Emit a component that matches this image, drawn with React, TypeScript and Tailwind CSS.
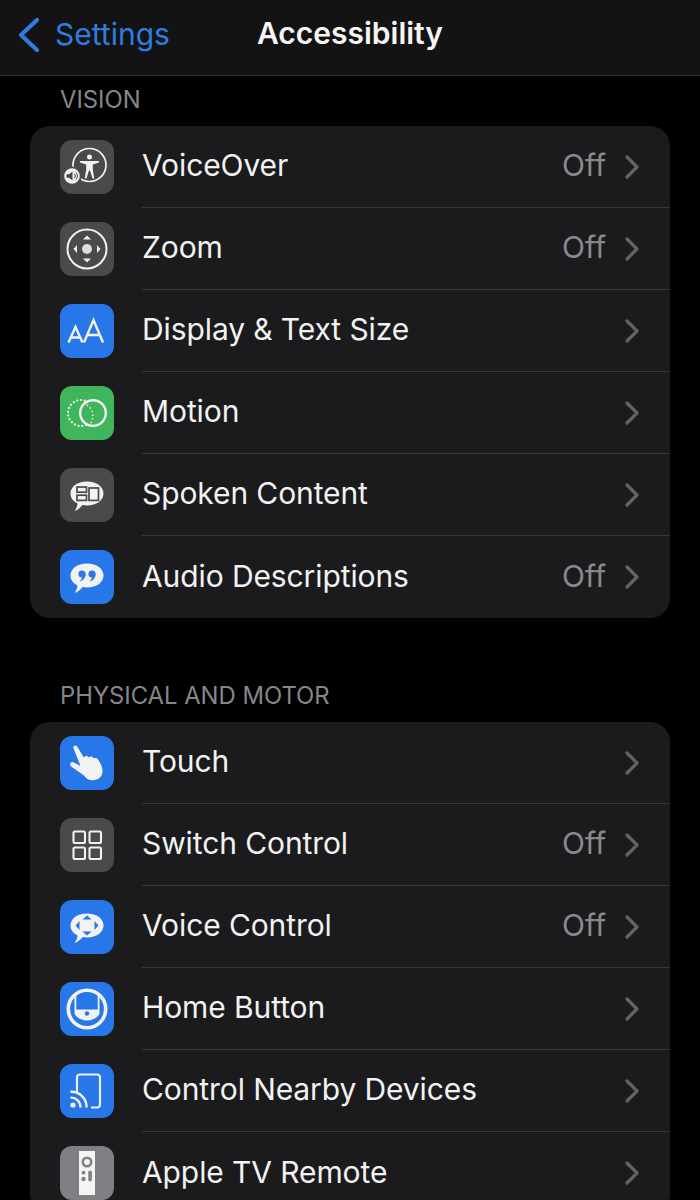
import React from "react";

const W = "#f2f2f2";

function VoiceOverIcon() {
  return (
    <svg viewBox="0 0 54 54" className="w-full h-full">
      <circle cx="29.5" cy="25" r="16.5" fill="none" stroke={W} strokeWidth="1.7" />
      <circle cx="29.5" cy="17" r="2.5" fill={W} />
      <path d="M20 21 L39 21 L39 22.4 L32.8 24.4 L32.8 29.5 L34.3 38.5 L32.5 38.5 L30 30.5 L29 30.5 L26.5 38.5 L24.7 38.5 L26.2 29.5 L26.2 24.4 L20 22.4 Z" fill={W} />
      <circle cx="12" cy="36" r="9.6" fill="#4a4a4a" />
      <circle cx="12" cy="36" r="7.8" fill={W} />
      <path d="M6.5 34.2 H9 L12.5 31.5 V40.5 L9 37.8 H6.5 Z" fill="#4a4a4a" />
      <path d="M14.3 33.8 A3 3 0 0 1 14.3 38.2 M16 32.5 A5 5 0 0 1 16 39.5" fill="none" stroke="#4a4a4a" strokeWidth="1" />
    </svg>
  );
}
function ZoomIcon() {
  return (
    <svg viewBox="0 0 54 54" className="w-full h-full">
      <circle cx="27" cy="27" r="19.5" fill="none" stroke={W} strokeWidth="2" />
      <circle cx="27" cy="27" r="5" fill="#dcdcdc" />
      <path d="M27 13.5 L31 17.5 H23 Z M27 40.5 L31 36.5 H23 Z M13.5 27 L17 23 V31 Z M40.5 27 L37 23 V31 Z" fill={W} />
    </svg>
  );
}
function TextSizeIcon() {
  return (
    <svg viewBox="0 0 54 54" className="w-full h-full">
      <path d="M8.5 38.5 L15.5 23 L22.5 38.5 M11 33.5 H20" fill="none" stroke={W} strokeWidth="2.4" />
      <path d="M24 38.5 L33.5 16 L43 38.5 M27 31 H40" fill="none" stroke={W} strokeWidth="2.4" />
    </svg>
  );
}
function MotionIcon() {
  return (
    <svg viewBox="0 0 54 54" className="w-full h-full">
      <circle cx="21" cy="27" r="13" fill="none" stroke={W} strokeWidth="2.2" strokeDasharray="0.1 3.7" strokeLinecap="round" />
      <circle cx="33" cy="27" r="12.8" fill="#3fb65b" stroke={W} strokeWidth="2.4" />
      <path d="M24 17.5 A13 13 0 0 1 29 39" fill="none" stroke="#dbe8a8" strokeWidth="1.8" strokeDasharray="0.1 3.7" strokeLinecap="round" />
    </svg>
  );
}
function Bubble({ fill = W }: { fill?: string }) {
  return (
    <path
      d="M27 13.5 C37 13.5 43.5 19 43.5 25.5 C43.5 32.5 36.5 37.5 27 37.5 C25.5 37.5 24 37.3 22.7 37 C20.5 39.5 17 42.8 14.5 42.7 C16.5 40.5 17.3 38 17.5 35.5 C13 33.3 10.5 29.8 10.5 25.5 C10.5 19 17 13.5 27 13.5 Z"
      fill={fill}
    />
  );
}
function SpokenIcon() {
  return (
    <svg viewBox="0 0 54 54" className="w-full h-full">
      <Bubble />
      <g fill="none" stroke="#4a4a4a" strokeWidth="1.7">
        <rect x="17" y="19" width="9.5" height="5.2" />
        <rect x="17" y="27.2" width="9.5" height="5.2" />
        <rect x="29" y="20" width="9.5" height="12.4" />
      </g>
    </svg>
  );
}
function AudioDescIcon() {
  const b = "#2777e8";
  return (
    <svg viewBox="0 0 54 54" className="w-full h-full">
      <Bubble />
      <circle cx="22" cy="24" r="3.6" fill={b} />
      <path d="M25.6 24 C25.6 28.5 22.5 31 19.5 31.5 C21.5 30 22 28 22 26.5 Z" fill={b} />
      <circle cx="32" cy="24" r="3.6" fill={b} />
      <path d="M35.6 24 C35.6 28.5 32.5 31 29.5 31.5 C31.5 30 32 28 32 26.5 Z" fill={b} />
    </svg>
  );
}
function TouchIcon() {
  return (
    <svg viewBox="0 0 54 54" className="w-full h-full">
      <path
        d="M13.2 11.5 C13.8 9 16.5 8.8 17.5 11 L23.8 21.5 C25 19.5 27.8 19.5 28.8 21.5 C30 20 32.8 20.3 33.8 22.5 C35 21.5 37.3 22 38.3 24 C41 28 42.8 32 42.5 36 C42 41 38 44.2 33 44.2 C28.5 44.2 26 42.5 24 39.5 L11.5 30.8 C8.8 28.8 10.6 25 13.5 26.2 L20.5 30 Z"
        fill={W}
      />
    </svg>
  );
}
function SwitchIcon() {
  return (
    <svg viewBox="0 0 54 54" className="w-full h-full">
      <g fill="none" stroke={W} strokeWidth="2.1">
        <rect x="13.5" y="13.5" width="11.5" height="11.5" rx="1.5" />
        <rect x="29.5" y="13.5" width="11.5" height="11.5" rx="1.5" />
        <rect x="13.5" y="29.5" width="11.5" height="11.5" rx="1.5" />
        <rect x="29.5" y="29.5" width="11.5" height="11.5" rx="1.5" />
      </g>
    </svg>
  );
}
function VoiceControlIcon() {
  const b = "#2777e8";
  return (
    <svg viewBox="0 0 54 54" className="w-full h-full">
      <Bubble />
      <path d="M27 15.5 L31.5 19.5 H22.5 Z M27 35.5 L31.5 31.5 H22.5 Z M15.5 25.5 L19.5 21 V30 Z M38.5 25.5 L34.5 21 V30 Z" fill={b} />
    </svg>
  );
}
function HomeButtonIcon() {
  const b = "#2777e8";
  return (
    <svg viewBox="0 0 54 54" className="w-full h-full">
      <circle cx="27" cy="27" r="18.7" fill="none" stroke={W} strokeWidth="3.6" />
      <path d="M14.5 14.5 C15 13.8 15.5 13.3 16.3 12.8 V27.5 H37.7 V12.8 C38.5 13.3 39 13.8 39.5 14.5 V32 C37 36 32 38.5 27 38.5 C22 38.5 17 36 14.5 32 Z" fill={W} />
      <circle cx="27" cy="31.5" r="2.2" fill={b} />
    </svg>
  );
}
function NearbyIcon() {
  return (
    <svg viewBox="0 0 54 54" className="w-full h-full">
      <path d="M17 29 V13.5 C17 11.5 18 10.5 20 10.5 H37 C39 10.5 40 11.5 40 13.5 V40.5 C40 42.5 39 43.5 37 43.5 H31" fill="none" stroke="#e6f0fc" strokeWidth="2.2" />
      <circle cx="13" cy="41" r="2.6" fill={W} />
      <path d="M10.5 33.6 A9.5 9.5 0 0 1 20.5 43.5 M10.5 27.8 A15 15 0 0 1 26.5 43.5" fill="none" stroke={W} strokeWidth="2.4" />
    </svg>
  );
}
function RemoteIcon() {
  return (
    <svg viewBox="0 0 54 54" className="w-full h-full">
      <rect x="19" y="5" width="16" height="44" fill="#f4f4f4" />
      <circle cx="27" cy="16" r="4.2" fill="none" stroke="#808084" strokeWidth="2.6" />
      <circle cx="23.5" cy="26.7" r="1.9" fill="#808084" />
      <circle cx="23.5" cy="33" r="2.2" fill="#808084" />
      <rect x="28.3" y="24.5" width="3.6" height="11" rx="1.8" fill="#808084" />
    </svg>
  );
}

type Row = { label: string; off?: boolean; bg: string; icon: React.ReactNode };

const vision: Row[] = [
  { label: "VoiceOver", off: true, bg: "bg-[#4a4a4a]", icon: <VoiceOverIcon /> },
  { label: "Zoom", off: true, bg: "bg-[#4a4a4a]", icon: <ZoomIcon /> },
  { label: "Display & Text Size", bg: "bg-[#2777e8]", icon: <TextSizeIcon /> },
  { label: "Motion", bg: "bg-[#3fb65b]", icon: <MotionIcon /> },
  { label: "Spoken Content", bg: "bg-[#4a4a4a]", icon: <SpokenIcon /> },
  { label: "Audio Descriptions", off: true, bg: "bg-[#2777e8]", icon: <AudioDescIcon /> },
];

const physical: Row[] = [
  { label: "Touch", bg: "bg-[#2777e8]", icon: <TouchIcon /> },
  { label: "Switch Control", off: true, bg: "bg-[#4a4a4a]", icon: <SwitchIcon /> },
  { label: "Voice Control", off: true, bg: "bg-[#2777e8]", icon: <VoiceControlIcon /> },
  { label: "Home Button", bg: "bg-[#2777e8]", icon: <HomeButtonIcon /> },
  { label: "Control Nearby Devices", bg: "bg-[#2777e8]", icon: <NearbyIcon /> },
  { label: "Apple TV Remote", bg: "bg-[#808084]", icon: <RemoteIcon /> },
];

function ListRow({ row, last }: { row: Row; last: boolean }) {
  return (
    <div className="flex h-[82px] items-stretch pl-[30px]">
      <div className="flex w-[54px] shrink-0 items-center">
        <div className={`h-[54px] w-[54px] overflow-hidden rounded-[12px] ${row.bg}`}>{row.icon}</div>
      </div>
      <div className={`ml-[28px] flex min-w-0 flex-1 items-center justify-between pr-[31px] ${last ? "" : "border-b border-[#38383a]"}`}>
        <span className="-translate-y-px text-[30px] tracking-[-0.1px] text-[#f2f2f2]">{row.label}</span>
        <div className="flex items-center">
          {row.off && <span className="mr-[19px] -translate-y-px text-[30px] text-[#8a8a8e]">Off</span>}
          <svg viewBox="0 0 14 24" className="h-[24px] w-[14px]">
            <path d="M2 2 L12 12 L2 22" fill="none" stroke="#636366" strokeWidth="3.2" strokeLinecap="round" strokeLinejoin="round" />
          </svg>
        </div>
      </div>
    </div>
  );
}

function Group({ rows }: { rows: Row[] }) {
  return (
    <div className="mx-[30px] overflow-hidden rounded-[20px] bg-[#1b1b1d]">
      {rows.map((r, i) => (
        <ListRow key={r.label} row={r} last={i === rows.length - 1} />
      ))}
    </div>
  );
}

export default function App() {
  return (
    <div className="h-[1200px] w-[700px] overflow-hidden bg-black font-['Inter','Liberation_Sans',sans-serif]">
      <header className="relative flex h-[76px] items-center justify-center border-b border-[#2a2a2b] bg-[#131313]">
        <div className="absolute left-[16px] top-[15px] flex -translate-y-[3px] items-center">
          <svg viewBox="0 0 24 38" className="h-[38px] w-[24px]">
            <path d="M21 4 L5 19 L21 34" fill="none" stroke="#2f7de0" strokeWidth="4.2" strokeLinecap="round" strokeLinejoin="round" />
          </svg>
          <span className="ml-[15px] text-[30px] text-[#2f7de0]">Settings</span>
        </div>
        <h1 className="-translate-y-[4px] text-[30px] font-semibold text-[#f5f5f5]">Accessibility</h1>
      </header>
      <div className="pl-[60px] pt-[9px] text-[23.8px] leading-[30px] text-[#86868a]">VISION</div>
      <div className="mt-[11px]">
        <Group rows={vision} />
      </div>
      <div className="pl-[60px] pt-[63px] text-[23.8px] leading-[30px] text-[#86868a]">PHYSICAL AND MOTOR</div>
      <div className="mt-[11px]">
        <Group rows={physical} />
      </div>
    </div>
  );
}
